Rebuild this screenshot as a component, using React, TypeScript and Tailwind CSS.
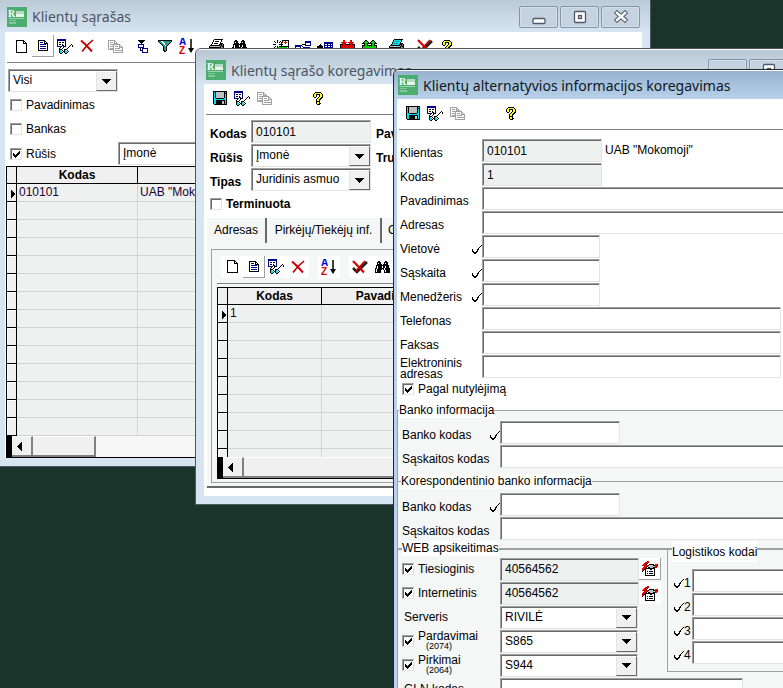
import type { ReactNode } from "react";

const PALETTE: Record<string, string> = {
  k: "#000000",
  w: "#ffffff",
  g: "#a0a0a0",
  d: "#808080",
  l: "#c0c0c0",
  n: "#000090",
  b: "#0000ff",
  r: "#e00000",
  c: "#00e0f0",
  y: "#ffff00",
  t: "#20a090",
  e: "#00d000",
};

const SPRITES: Record<string, string[]> = {
  page: [
    "kkkkkkkk...",
    "kwwwwwwkk..",
    "kwwwwwwkwk.",
    "kwwwwwwkkkk",
    "kwwwwwwwwwk",
    "kwwwwwwwwwk",
    "kwwwwwwwwwk",
    "kwwwwwwwwwk",
    "kwwwwwwwwwk",
    "kwwwwwwwwwk",
    "kwwwwwwwwwk",
    "kwwwwwwwwwk",
    "kkkkkkkkkkk",
  ],
  text: [
    "kkkkkkk...",
    "kwwwwwkk..",
    "kwnnnwkwk.",
    "kwwwwwkkkk",
    "kwnnnnnnwk",
    "kwwwwwwwwk",
    "kwnnnnnnwk",
    "kwwwwwwwwk",
    "kwnnnnnnwk",
    "kwwwwwwwwk",
    "kkkkkkkkkk",
  ],
  view: [
    "nnnnnnnnn.......",
    "nnnnnnnnn.......",
    "nwwwwwwwn.......",
    "nwkkwkkwn.......",
    "nwwwwwwwn.......",
    "nwkkwkwwn.....k.",
    "nwwwwkkwn....k.k",
    "nnnnkwknn...k..k",
    "...k..k....k....",
    "..k..k....k.....",
    "..kkk..kkk......",
    "..kcwk.kcwk.....",
    "..kccwkkccwk....",
    "..kcck.kcck.....",
    "...kk...kk......",
  ],
  copy: [
    "ggggggg........",
    "gwwwwwgg.......",
    "gwgggwgwg......",
    "gwwwwwgggg.....",
    "gwgggggggggg...",
    "gwwwwgwwwwwgg..",
    "gwggggwgggwgwg.",
    "gwwwwgwwwwwgggg",
    "gwggggwgggggwwg",
    "ggggggwwwwwwwwg",
    ".....gwgggggggg",
    ".....gwwwwwwwwg",
    ".....gggggggggg",
  ],
  tree: [
    "kkkkkkk...",
    ".kkkkk....",
    "..kkk.....",
    "...k......",
    "nnnnnn....",
    "nwwwwn....",
    "nwwwwn....",
    "nnnnnn....",
    "..k.nnnnnn",
    "..k.nwwwwn",
    "..kknwwwwn",
    "....nwwwwn",
    "....nnnnnn",
  ],
  filter: [
    "kkkkkkkkkkkkkk",
    "kttwwttttttttk",
    ".kttwwtttttdk.",
    "..kttwwtttdk..",
    "...kttwttdk...",
    "....kttwdk....",
    ".....ktdk.....",
    ".....ktdk.....",
    ".....ktdk.....",
    ".....ktdk.....",
    ".....kkdk.....",
    "......kk......",
  ],
  print: [
    ".....kkkkkkkkk..",
    "....kwwwwwwwk...",
    "....kwkkkkwwk...",
    "...kwwwwwwwk....",
    "...kwkkkkwwkkk..",
    "..kwwwwwwwkkkdk.",
    ".kkkkkkkkkkdkdk.",
    "kllllllllllkdkk.",
    "kkkkkkkkkkkkddk.",
    "klllllllyylkdk..",
    "kllllllllllkkk..",
    "kkkkkkkkkkkkk...",
    ".kllllllllkk....",
    "..kkkkkkkkk.....",
  ],
  printTeal: [
    ".....kkkkkkkkk..",
    "....kccccccck...",
    "....kcttttcck...",
    "...kccccccck....",
    "...kcttttcckkk..",
    "..kccccccckkkdk.",
    ".kkkkkkkkkkdkdk.",
    "kllllllllllkdkk.",
    "kkkkkkkkkkkkddk.",
    "kdddddddyydkdk..",
    "kddddddddddkkk..",
    "kkkkkkkkkkkkk...",
    ".kddddddddkk....",
    "..kkkkkkkkk.....",
  ],
  find: [
    "...kk.....kk...",
    "..kkkk...kkkk..",
    "..kwkk...kwkk..",
    "..kkkkk.kkkkk..",
    ".kkkkkkkkkkkkk.",
    ".kwkkkkwkkwkkk.",
    ".kwkkkkwkkwkkk.",
    "kkwkkkkkkwkkkkk",
    "kwkkkkk.kwkkkkk",
    "kwkkkk...kwkkkk",
    "kwkkkk...kwkkkk",
    "kkkkkk...kkkkkk",
  ],
  spark: [
    "....k....kkkkkkk",
    ".k..k..k.kwwrwwk",
    "..k.k.k.kkwrrrwk",
    "....w...kwwwrwwk",
    "kkkwwwkkkkwwwwwk",
    "....w...kwwwwwwk",
    "..k.k.kkkkkkkkkk",
    ".k..keeeeeeeeewk",
    "....keeeeeeeeewk",
    "....kwwwwwwwwwwk",
    "....kwwwwwwwwwwk",
    "....kkkkkkkkkkkk",
  ],
  link: [
    "..........nnnnnn",
    "..........nnnnnn",
    "..........nwwwwn",
    ".......kkknwwwwn",
    "nnnnnnk...nnnnnn",
    "nnnnnn.k........",
    "nwwwwn..knnnnnn.",
    "nwwwwn...nnnnnn.",
    "nnnnnn...nwwwwn.",
    ".........nwwwwn.",
    ".........nnnnnn.",
  ],
  insert: [
    ".......nnnnnnnnn",
    ".......nnnnnnnnn",
    "...k...nwwnwwnwn",
    "..kkk..nnnnnnnnn",
    "kkkkkk.nwwnwwnwn",
    "kkkkkk.nnnnnnnnn",
    "kkkkkk.nwwnwwnwn",
    ".......nnnnnnnnn",
  ],
  down: [
    "...rr.....rr...",
    "...rr.....rr...",
    ".rrrrrr.rrrrrr.",
    "..rrrr...rrrr..",
    "kkkrrkkkkkrrkkk",
    "krrrrrrrrrrrrrk",
    "krrrrrrrrrrrrrk",
    "krrrrrrrrrrrrrk",
    "kkkkkkkkkkkkkkk",
    "krrrrrrrrrrrrrk",
    "kkkkkkkkkkkkkkk",
    ".kk.........kk.",
  ],
  up: [
    "...kk.....kk...",
    "..keek...keek..",
    ".keeeek.keeeek.",
    "kkkeekkkkkeekkk",
    "..keek...keek..",
    "kkkeekkkkkeekkk",
    "keeeeeeeeeeeeek",
    "keeeeeeeeeeeeek",
    "kkkkkkkkkkkkkkk",
    "keeeeeeeeeeeeek",
    "kkkkkkkkkkkkkkk",
    ".kk.........kk.",
  ],
  save: [
    "kkkkkkkkkkkkkk",
    "kckllllllllkck",
    "kckllllllllkkk",
    "kckllllllllkck",
    "kckllllllllkck",
    "kckllllllllkck",
    "kckllllllllkck",
    "kcckkkkkkkkcck",
    "kcccccccccccck",
    "kcckkkkkkkkkck",
    "kcckkkkkkllkck",
    "kcckkkkkkllkck",
    "kcckkkkkkllkck",
    ".kkkkkkkkkkkkk",
  ],
  help: [
    "..kkkkkk..",
    ".kyyyyyyk.",
    "kyykkkkyyk",
    "kyyk..kyyk",
    "kyyk..kyyk",
    ".kk..kyykk",
    "....kyykk.",
    "...kyykk..",
    "...kyyk...",
    "...kkkk...",
    "...kyyk...",
    "...kyykk..",
    "....kkk...",
  ],
  tick: [
    ".........k",
    "........k.",
    ".......k..",
    "......k...",
    "k....kk...",
    "k....k....",
    "kk..kk....",
    ".kkkk.....",
    "..kk......",
  ],
  mark: [
    "......k",
    ".....kk",
    "k...kkk",
    "kk.kkk.",
    "kkkkk..",
    ".kkk...",
    "..k....",
  ],
  arrow: ["kkkkkkkkk", ".kkkkkkk.", "..kkkkk..", "...kkk...", "....k...."],
  left: ["....k", "...kk", "..kkk", ".kkkk", "kkkkk", ".kkkk", "..kkk", "...kk", "....k"],
  pointer: ["k....", "kk...", "kkk..", "kkkk.", "kkkk.", "kkk..", "kk...", "k...."],
  card: [
    ".....rr.........",
    "...rrrr.........",
    "..rrrk..........",
    ".rrrk..kkkkk.rrr",
    "rrrrrrkllllkkrrr",
    "..rrrklllllllrrr",
    ".rrrk.kklllkkrr.",
    "rrrkkkkkkkkkk...",
    "rrkkwwwwkkwwk...",
    "rk.kwwwwwwwwk...",
    "k..kwkwkkkkwk...",
    "...kwwwwwwwwk...",
    "...kwkwkkkkwk...",
    "...kwwwwwwwwk...",
    "...kkkkkkkkkk...",
  ],
};

function Sprite({ name }: { name: string }) {
  const rows = SPRITES[name];
  return (
    <svg
      width={rows[0].length}
      height={rows.length}
      shapeRendering="crispEdges"
      aria-hidden="true"
      className="shrink-0"
    >
      {rows.flatMap((row, y) =>
        [...row].map((c, x) =>
          c === "." ? null : (
            <rect key={`${x}-${y}`} x={x} y={y} width={1} height={1} fill={PALETTE[c]} />
          ),
        ),
      )}
    </svg>
  );
}

function DeleteIcon() {
  return (
    <svg width="14" height="14" fill="none" aria-hidden="true">
      <path d="M1 1.500 L6 6 L12 12.500" stroke="#d00000" strokeWidth="2" />
      <path d="M13 1 L7 6.500 L2 12.500" stroke="#b00000" strokeWidth="1.600" />
    </svg>
  );
}

function DeleteCheckedIcon() {
  return (
    <svg width="16" height="14" fill="none" aria-hidden="true">
      <path d="M1 8 L5 12 L15 2" stroke="#202020" strokeWidth="2.500" />
      <path d="M1 1 L12 12.500" stroke="#e00000" strokeWidth="2.200" />
      <path d="M13 1 L3 12" stroke="#c00000" strokeWidth="1.800" />
    </svg>
  );
}

function SortIcon() {
  return (
    <svg width="16" height="16" aria-hidden="true">
      <text x="0" y="7" fontSize="10" fontWeight="bold" fill="#0000e0" fontFamily="Liberation Sans, sans-serif">
        A
      </text>
      <text x="0" y="16" fontSize="10" fontWeight="bold" fill="#e00000" fontFamily="Liberation Sans, sans-serif">
        Z
      </text>
      <path d="M12 1 V12" stroke="#000" strokeWidth="1.500" />
      <path d="M9 10 H15 L12 15 Z" fill="#000" />
    </svg>
  );
}

function Logo() {
  return (
    <svg width="20" height="20" aria-hidden="true" className="shrink-0">
      <rect width="20" height="20" fill="#4bae70" />
      <rect x="9" y="4" width="8" height="3" fill="#b4dcc2" />
      <rect x="9" y="7" width="8" height="3" fill="#e6f4ea" />
      <text x="1" y="10" fontSize="10" fontWeight="bold" fill="#fff" fontFamily="Liberation Serif, serif">
        R
      </text>
      <rect x="2" y="11" width="15" height="1" fill="#9fd3b1" />
      <rect x="2" y="13" width="7" height="1" fill="#86c79d" />
      <rect x="2" y="15" width="7" height="2" fill="#86c79d" />
    </svg>
  );
}

function Tool({ label, raised, children }: { label: string; raised?: boolean; children: ReactNode }) {
  return (
    <button
      type="button"
      title={label}
      aria-label={label}
      className={`flex size-[22px] shrink-0 items-center justify-center bg-white ${
        raised ? "border-r border-b border-[#a0a0a0]" : ""
      }`}
    >
      {children}
    </button>
  );
}

function Toolbar({ children }: { children: ReactNode }) {
  return (
    <div className="mx-0.5 flex h-[31px] shrink-0 items-start border-b border-[#808080] pt-[3px] pl-[3px]">
      {children}
    </div>
  );
}

function EditTools() {
  return (
    <Toolbar>
      <Tool label="Išsaugoti">
        <Sprite name="save" />
      </Tool>
      <Tool label="Peržiūra">
        <Sprite name="view" />
      </Tool>
      <Tool label="Kopijuoti">
        <Sprite name="copy" />
      </Tool>
      <div className="ml-8">
        <Tool label="Pagalba">
          <Sprite name="help" />
        </Tool>
      </div>
    </Toolbar>
  );
}

function WindowButtons() {
  const button =
    "flex h-[22px] w-[39px] items-center justify-center rounded-xs border border-[#8795ab] bg-[#c5d2e0] shadow-[inset_0_0_0_1px_#d5dfea]";
  return (
    <div className="ml-auto flex shrink-0 gap-0.5 pr-0.5">
      <button type="button" aria-label="Sumažinti" className={button}>
        <svg width="14" height="16">
          <rect x="1" y="9.500" width="12" height="5" rx="1" fill="#fff" stroke="#50586a" strokeWidth="1.300" />
        </svg>
      </button>
      <button type="button" aria-label="Padidinti" className={button}>
        <svg width="14" height="14">
          <rect x="1.500" y="1.500" width="11" height="11" rx="1" fill="#fff" stroke="#50586a" strokeWidth="1.300" />
          <rect x="5.500" y="5.500" width="3" height="3" fill="#c5d2e0" stroke="#50586a" strokeWidth="1.300" />
        </svg>
      </button>
      <button type="button" aria-label="Uždaryti" className={button}>
        <svg width="14" height="13" fill="none" strokeLinecap="square">
          <path d="M3 3 L11 10 M11 3 L3 10" stroke="#50586a" strokeWidth="4.500" />
          <path d="M3 3 L11 10 M11 3 L3 10" stroke="#fff" strokeWidth="2.500" />
        </svg>
      </button>
    </div>
  );
}

const SUNKEN =
  "border border-t-[#a0a0a0] border-l-[#a0a0a0] border-r-[#e3e3e3] border-b-[#e3e3e3] shadow-[inset_1px_1px_0_#696969]";

interface FieldProps {
  id?: string;
  label?: string;
  value?: string;
  width: string;
  readOnly?: boolean;
}

function TextField({ id, label, value = "", width, readOnly }: FieldProps) {
  return (
    <input
      id={id}
      aria-label={label}
      type="text"
      defaultValue={value}
      readOnly={readOnly}
      className={`h-[23px] shrink-0 rounded-none px-1 outline-none ${SUNKEN} ${width} ${
        readOnly ? "bg-[#eff1f0]" : "bg-white"
      }`}
    />
  );
}

function SelectField({ id, label, value, width }: FieldProps) {
  return (
    <div className={`relative h-[23px] shrink-0 bg-white ${SUNKEN} ${width}`}>
      <select
        id={id}
        aria-label={label}
        defaultValue={value}
        className="block h-full w-full appearance-none truncate bg-transparent pr-5 pl-1 outline-none"
      >
        <option>{value}</option>
      </select>
      <span className="pointer-events-none absolute top-px right-0 bottom-0 flex w-[21px] items-center justify-center border border-t-white border-r-[#696969] border-b-[#696969] border-l-[#e3e3e3] bg-[#f0f0f0]">
        <Sprite name="arrow" />
      </span>
    </div>
  );
}

function CheckBox({ label, checked, note }: { label: string; checked?: boolean; note?: string }) {
  return (
    <label className="flex items-center gap-1">
      <span className={`relative size-3 shrink-0 bg-white ${SUNKEN}`}>
        <input type="checkbox" defaultChecked={checked} className="peer absolute inset-0 appearance-none" />
        <span className="pointer-events-none absolute inset-0 hidden items-center justify-center pt-px pl-px peer-checked:flex">
          <Sprite name="mark" />
        </span>
      </span>
      {note ? (
        <span className="leading-[11px]">
          {label}
          <span className="block pl-2 text-[9px] leading-[9px]">({note})</span>
        </span>
      ) : (
        <span>{label}</span>
      )}
    </label>
  );
}

interface RowProps {
  id: string;
  label: string;
  labelWidth: string;
  tick?: boolean;
  children: ReactNode;
}

function Row({ id, label, labelWidth, tick, children }: RowProps) {
  return (
    <div className="flex h-6 items-start">
      <label htmlFor={id} className={`flex h-full shrink-0 items-center justify-between pt-1 leading-[11px] ${labelWidth}`}>
        {label}
        {tick && <Sprite name="tick" />}
      </label>
      {children}
    </div>
  );
}

interface GridProps {
  columns: { title: string; width: string }[];
  first: string[];
  rowCount: number;
  thumb: string;
}

function DataGrid({ columns, first, rowCount, thumb }: GridProps) {
  return (
    <div className="flex min-h-0 flex-1 flex-col border-y border-l border-black bg-[#eff1f0]">
      <div className="min-h-0 flex-1 overflow-hidden">
        <table className="w-full table-fixed border-separate border-spacing-0">
          <thead>
            <tr className="h-[17px] bg-[#f0f0f0]">
              <th className="w-[10px] border-r border-b border-black p-0" />
              {columns.map((c) => (
                <th key={c.title} className={`border-r border-b border-black p-0 font-bold leading-[15px] ${c.width}`}>
                  {c.title}
                </th>
              ))}
            </tr>
          </thead>
          <tbody>
            {Array.from({ length: rowCount }, (_, i) => (
              <tr key={i} className="h-[18px]">
                <td className="border-r border-b border-black bg-[#f0f0f0] p-0 shadow-[inset_1px_1px_0_#fff]">
                  {i === 0 && (
                    <span className="flex justify-end pt-0.5">
                      <Sprite name="pointer" />
                    </span>
                  )}
                </td>
                {columns.map((c, j) => (
                  <td key={c.title} className="truncate border-r border-b border-[#d2d4d3] p-0 pl-0.5 leading-[15px] text-[#1a0033]">
                    {i === 0 ? first[j] : ""}
                  </td>
                ))}
              </tr>
            ))}
          </tbody>
        </table>
      </div>
      <div className="flex h-[21px] shrink-0 border-l-5 border-black bg-[#f6f6f6]">
        <button
          type="button"
          aria-label="Slinkti kairėn"
          className="flex w-[21px] items-center justify-center border-t border-r-2 border-b-2 border-t-white border-r-[#808080] border-b-[#808080] bg-[#f0f0f0] pr-1"
        >
          <Sprite name="left" />
        </button>
        <div className={`border-t border-r-2 border-b-2 border-t-white border-r-[#808080] border-b-[#808080] bg-[#f0f0f0] ${thumb}`} />
      </div>
    </div>
  );
}

function ClientListWindow() {
  return (
    <section className="absolute -top-1 -left-1 flex h-[471px] w-[655px] flex-col border border-[#4c5560] bg-[#d7e4f2] px-2 pb-2">
      <header className="-mx-2 flex h-[35px] shrink-0 items-center gap-[5px] bg-linear-to-b from-[#bac8d6] to-[#d7e4f2] px-2 pt-1 pl-2.5">
        <Logo />
        <h1 className="font-['Noto_Sans'] text-[14px] text-[#4b5563]">Klientų sąrašas</h1>
        <WindowButtons />
      </header>
      <div className="flex min-h-0 flex-1 flex-col bg-white">
        <Toolbar>
          <Tool label="Naujas">
            <Sprite name="page" />
          </Tool>
          <Tool label="Koreguoti" raised>
            <Sprite name="text" />
          </Tool>
          <Tool label="Peržiūra">
            <Sprite name="view" />
          </Tool>
          <Tool label="Šalinti">
            <DeleteIcon />
          </Tool>
          <div className="mx-1.5">
            <Tool label="Kopijuoti">
              <Sprite name="copy" />
            </Tool>
          </div>
          <Tool label="Medis">
            <Sprite name="tree" />
          </Tool>
          <Tool label="Filtras">
            <Sprite name="filter" />
          </Tool>
          <Tool label="Rikiuoti">
            <SortIcon />
          </Tool>
          <div className="mr-5 ml-2 flex">
            <Tool label="Spausdinti">
              <Sprite name="print" />
            </Tool>
            <Tool label="Ieškoti">
              <Sprite name="find" />
            </Tool>
          </div>
          <Tool label="Kurti">
            <Sprite name="spark" />
          </Tool>
          <Tool label="Ryšiai">
            <Sprite name="link" />
          </Tool>
          <Tool label="Įterpti">
            <Sprite name="insert" />
          </Tool>
          <Tool label="Importas">
            <Sprite name="down" />
          </Tool>
          <Tool label="Eksportas">
            <Sprite name="up" />
          </Tool>
          <div className="mx-1.5">
            <Tool label="Ataskaita">
              <Sprite name="printTeal" />
            </Tool>
          </div>
          <Tool label="Šalinti pažymėtus">
            <DeleteCheckedIcon />
          </Tool>
          <Tool label="Pagalba">
            <Sprite name="help" />
          </Tool>
        </Toolbar>
        <div className="px-[3px] pt-1.5">
          <div className="h-6">
            <SelectField label="Rodyti" value="Visi" width="w-[110px]" />
          </div>
          <div className="flex h-6 items-center pl-0.5">
            <CheckBox label="Pavadinimas" />
          </div>
          <div className="flex h-6 items-center pl-0.5">
            <CheckBox label="Bankas" />
          </div>
          <div className="flex h-6 items-center pl-0.5">
            <div className="w-[108px] shrink-0 pt-0.5">
              <CheckBox label="Rūšis" checked />
            </div>
            <TextField label="Rūšis" value="Įmonė" width="w-[200px]" />
          </div>
        </div>
        <div className="flex min-h-0 flex-1 flex-col pt-px pl-px">
          <DataGrid
            columns={[
              { title: "Kodas", width: "w-[121px]" },
              { title: "Pavadinimas", width: "w-auto" },
            ]}
            first={["010101", 'UAB "Mokomoji"']}
            rowCount={14}
            thumb="w-[63px]"
          />
        </div>
      </div>
    </section>
  );
}

function ClientEditWindow() {
  return (
    <section className="absolute top-12 -right-[57px] left-[195px] flex h-[457px] flex-col overflow-hidden rounded-t-md border border-[#4c5560] bg-[#d7e4f2] px-2 pb-2">
      <header className="-mx-2 flex h-[35px] shrink-0 items-center gap-[5px] border-t border-white bg-linear-to-b from-[#bac8d6] to-[#d7e4f2] px-2 pt-1.5 pl-2.5">
        <Logo />
        <h1 className="font-['Noto_Sans'] text-[14px] text-[#4b5563]">Klientų sąrašo koregavimas</h1>
        <WindowButtons />
      </header>
      <div className="flex min-h-0 flex-1 flex-col bg-white pb-2">
        <EditTools />
        <div className="flex gap-[5px] pt-[5px] pl-1.5">
          <div>
            <Row id="kodas" label="Kodas" labelWidth="w-[41px] font-bold">
              <TextField id="kodas" value="010101" width="w-[120px]" readOnly />
            </Row>
            <Row id="rusis" label="Rūšis" labelWidth="w-[41px] font-bold">
              <SelectField id="rusis" value="Įmonė" width="w-[120px]" />
            </Row>
            <Row id="tipas" label="Tipas" labelWidth="w-[41px] font-bold">
              <SelectField id="tipas" value="Juridinis asmuo" width="w-[120px]" />
            </Row>
            <div className="flex h-6 items-center font-bold">
              <CheckBox label="Terminuota" />
            </div>
          </div>
          <div>
            <Row id="pavadinimas" label="Pavadinimas" labelWidth="w-[90px] font-bold">
              <TextField id="pavadinimas" value="Mokomoji" width="w-[200px]" />
            </Row>
            <Row id="trumpas" label="Trumpas pav." labelWidth="w-[90px] font-bold">
              <TextField id="trumpas" value="Mokomoji" width="w-[200px]" />
            </Row>
          </div>
        </div>
        <div className="mt-0.5 ml-[3px] flex min-h-0 flex-1 flex-col border-b-2 border-[#696969] bg-[#f5f7f7]">
          <div role="tablist" className="flex h-[25px] shrink-0">
            <button type="button" role="tab" aria-selected="true" className="w-[60px] border-r-2 border-[#696969]">
              Adresas
            </button>
            <button type="button" role="tab" className="w-[115px] border-r-2 border-[#696969]">
              Pirkėjų/Tiekėjų inf.
            </button>
            <button type="button" role="tab" className="px-1.5">
              Grupės
            </button>
          </div>
          <div className="mt-1.5 mr-1 mb-[3px] ml-1 flex min-h-0 flex-1 flex-col border border-[#a0a0a0] pb-[3px] pl-[5px]">
            <div className="flex h-[34px] shrink-0 items-center gap-[9px] border-b border-[#808080] pl-1">
              <div className="flex">
                <Tool label="Naujas adresas">
                  <Sprite name="page" />
                </Tool>
                <Tool label="Koreguoti adresą" raised>
                  <Sprite name="text" />
                </Tool>
                <Tool label="Peržiūrėti adresą">
                  <Sprite name="view" />
                </Tool>
                <Tool label="Šalinti adresą">
                  <DeleteIcon />
                </Tool>
              </div>
              <Tool label="Rikiuoti adresus">
                <SortIcon />
              </Tool>
              <div className="flex">
                <Tool label="Šalinti pažymėtus adresus">
                  <DeleteCheckedIcon />
                </Tool>
                <Tool label="Ieškoti adreso">
                  <Sprite name="find" />
                </Tool>
              </div>
            </div>
            <div className="flex min-h-0 flex-1 flex-col pt-[3px]">
              <DataGrid
                columns={[
                  { title: "Kodas", width: "w-[94px]" },
                  { title: "Pavadinimas", width: "w-[142px]" },
                  { title: "Adresas", width: "w-auto" },
                ]}
                first={["1", "", ""]}
                rowCount={9}
                thumb="w-[300px]"
              />
            </div>
          </div>
        </div>
      </div>
    </section>
  );
}

function AltInfoWindow() {
  const label = "w-[82px]";
  const bank = "w-[98px]";
  return (
    <section className="absolute top-[69px] -right-[100px] -bottom-[60px] left-[393px] flex flex-col overflow-hidden rounded-t-md border border-[#20262e] bg-[#b9d1ea] px-[3px]">
      <header className="-mx-[3px] flex h-[29px] shrink-0 items-center gap-[5px] border-t border-white bg-linear-to-b from-[#97b3d1] to-[#b9d1ea] pl-1">
        <Logo />
        <h1 className="font-['Noto_Sans'] text-[14px] text-[#101820]">
          Klientų alternatyvios informacijos koregavimas
        </h1>
      </header>
      <div className="flex-1 bg-white">
        <EditTools />
        <div className="pt-[9px] pl-[3px]">
          <Row id="a-klientas" label="Klientas" labelWidth={label}>
            <TextField id="a-klientas" value="010101" width="w-[120px]" readOnly />
            <span className="pt-1 pl-[3px]">UAB "Mokomoji"</span>
          </Row>
          <Row id="a-kodas" label="Kodas" labelWidth={label}>
            <TextField id="a-kodas" value="1" width="w-[120px]" readOnly />
          </Row>
          <Row id="a-pavadinimas" label="Pavadinimas" labelWidth={label}>
            <TextField id="a-pavadinimas" width="w-[360px]" />
          </Row>
          <Row id="a-adresas" label="Adresas" labelWidth={label}>
            <TextField id="a-adresas" width="w-[360px]" />
          </Row>
          <Row id="a-vietove" label="Vietovė" labelWidth={label} tick>
            <TextField id="a-vietove" width="w-[118px]" />
          </Row>
          <Row id="a-saskaita" label="Sąskaita" labelWidth={label} tick>
            <TextField id="a-saskaita" width="w-[118px]" />
          </Row>
          <Row id="a-menedzeris" label="Menedžeris" labelWidth={label} tick>
            <TextField id="a-menedzeris" width="w-[118px]" />
          </Row>
          <Row id="a-telefonas" label="Telefonas" labelWidth={label}>
            <TextField id="a-telefonas" width="w-[299px]" />
          </Row>
          <Row id="a-faksas" label="Faksas" labelWidth={label}>
            <TextField id="a-faksas" width="w-[299px]" />
          </Row>
          <Row id="a-email" label="Elektroninis adresas" labelWidth={label}>
            <TextField id="a-email" width="w-[299px]" />
          </Row>
          <div className="flex h-5 items-center pl-0.5">
            <CheckBox label="Pagal nutylėjimą" checked />
          </div>
        </div>
        <fieldset className="mt-1 border-t border-l border-[#a0a0a0] bg-[#f5f7f7] pt-[3px] pb-[5px] pl-1">
          <legend className="-ml-[3px] bg-white leading-[15px]">Banko informacija</legend>
          <Row id="b-kodas" label="Banko kodas" labelWidth={bank} tick>
            <TextField id="b-kodas" width="w-[120px]" />
          </Row>
          <Row id="b-saskaita" label="Sąskaitos kodas" labelWidth={bank}>
            <TextField id="b-saskaita" width="w-[360px]" />
          </Row>
        </fieldset>
        <div className="border-l border-[#a0a0a0] bg-[#f5f7f7]">
          <fieldset className="border-t border-[#a0a0a0] pt-1 pl-1">
            <legend className="-ml-px bg-white leading-[15px]">Korespondentinio banko informacija</legend>
            <Row id="k-kodas" label="Banko kodas" labelWidth={bank} tick>
              <TextField id="k-kodas" width="w-[120px]" />
            </Row>
            <Row id="k-saskaita" label="Sąskaitos kodas" labelWidth={bank}>
              <TextField id="k-saskaita" width="w-[360px]" />
            </Row>
          </fieldset>
          <fieldset className="flex items-start gap-1.5 border-t-2 border-[#a0a0a0] pt-px pl-1">
            <legend className="bg-white leading-[15px]">WEB apsikeitimas</legend>
            <div>
              <div className="flex h-6 items-center">
                <div className={bank}>
                  <CheckBox label="Tiesioginis" checked />
                </div>
                <TextField label="Tiesioginis kodas" value="40564562" width="w-[139px]" readOnly />
                <Tool label="Tiesioginis siuntimas" raised>
                  <Sprite name="card" />
                </Tool>
              </div>
              <div className="flex h-6 items-center">
                <div className={bank}>
                  <CheckBox label="Internetinis" checked />
                </div>
                <TextField label="Internetinis kodas" value="40564562" width="w-[139px]" readOnly />
                <Tool label="Internetinis siuntimas">
                  <Sprite name="card" />
                </Tool>
              </div>
              <div className="flex h-6 items-center">
                <label htmlFor="w-serveris" className={`pl-0.5 ${bank}`}>
                  Serveris
                </label>
                <SelectField id="w-serveris" value="RIVILĖ" width="w-[138px]" />
              </div>
              <div className="flex h-6 items-center">
                <div className={bank}>
                  <CheckBox label="Pardavimai" note="2074" checked />
                </div>
                <SelectField label="Pardavimai" value="S865" width="w-[138px]" />
              </div>
              <div className="flex h-6 items-center">
                <div className={bank}>
                  <CheckBox label="Pirkimai" note="2064" checked />
                </div>
                <SelectField label="Pirkimai" value="S944" width="w-[138px]" />
              </div>
              <div className="flex h-6 items-center">
                <label htmlFor="w-gln" className={`shrink-0 pl-0.5 ${bank}`}>
                  GLN kodas
                </label>
                <div className="w-[161px]">
                  <TextField id="w-gln" width="w-[243px]" />
                </div>
              </div>
            </div>
            <fieldset className="-mt-4 border border-[#a0a0a0] pt-[13px] pb-1.5 pl-1.5">
              <legend className="-ml-0.5 h-[15px]">
                <span className="block bg-white pt-1 pb-0.5 leading-[15px]">Logistikos kodai</span>
              </legend>
              {["1", "2", "3", "4"].map((n) => (
                <div key={n} className="flex h-6 items-start">
                  <label htmlFor={`l-${n}`} className="flex h-full w-[18px] shrink-0 items-center pt-1">
                    <Sprite name="tick" />
                    {n}
                  </label>
                  <TextField id={`l-${n}`} width="w-[160px]" />
                </div>
              ))}
            </fieldset>
          </fieldset>
        </div>
      </div>
    </section>
  );
}

export default function App() {
  return (
    <main className="relative h-screen overflow-hidden bg-[#1a332b] font-['Liberation_Sans',Arial,sans-serif] text-[12px] leading-[15px] text-black">
      <ClientListWindow />
      <ClientEditWindow />
      <AltInfoWindow />
    </main>
  );
}
